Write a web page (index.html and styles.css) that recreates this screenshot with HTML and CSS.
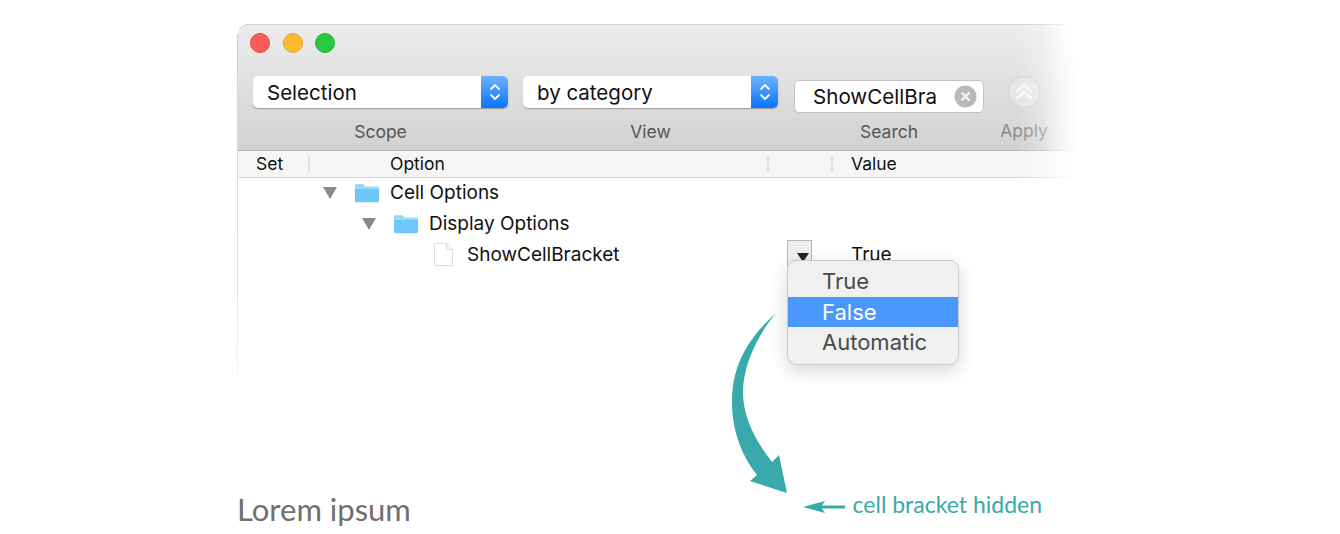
FILE: index.html
```html
<!DOCTYPE html>
<html lang="en">
<head>
    <meta charset="UTF-8">
    <title>Option Inspector</title>
    <link rel="stylesheet" href="styles.css">
</head>
<body>
    <div class="figure">
        <div class="window">
            <div class="toolbar">
                <div class="traffic">
                    <span class="light red"></span>
                    <span class="light yellow"></span>
                    <span class="light green"></span>
                </div>
                <div class="controls">
                    <div class="group group-scope">
                        <div class="select">
                            <span class="select-text">Selection</span>
                            <span class="stepper">
                                <svg width="14" height="22" viewBox="0 0 14 22"><path d="M2.5 8.5 7 4l4.500 4.500M2.500 13.500 7 18l4.500-4.500" fill="none" stroke="#fff" stroke-width="1.800"/></svg>
                            </span>
                        </div>
                        <div class="group-label">Scope</div>
                    </div>
                    <div class="group group-view">
                        <div class="select">
                            <span class="select-text">by category</span>
                            <span class="stepper">
                                <svg width="14" height="22" viewBox="0 0 14 22"><path d="M2.5 8.5 7 4l4.500 4.500M2.500 13.500 7 18l4.500-4.500" fill="none" stroke="#fff" stroke-width="1.800"/></svg>
                            </span>
                        </div>
                        <div class="group-label">View</div>
                    </div>
                    <div class="group group-search">
                        <div class="search">
                            <span class="search-text">ShowCellBra</span>
                            <svg class="clear" width="23" height="23" viewBox="0 0 23 23"><circle cx="11.500" cy="11.500" r="11" fill="#b9b9b9"/><path d="M7.500 7.500l8 8M15.500 7.500l-8 8" stroke="#f4f4f4" stroke-width="2.400"/></svg>
                        </div>
                        <div class="group-label">Search</div>
                    </div>
                    <div class="group group-apply">
                        <svg class="apply-icon" width="34" height="34" viewBox="0 0 34 34"><circle cx="17" cy="17" r="15.500" fill="#e6e6e6" stroke="#d2d2d2"/><path d="M9.500 17 17 10l7.500 7M9.500 24 17 17l7.500 7" fill="none" stroke="#f8f8f8" stroke-width="3"/></svg>
                        <div class="group-label">Apply</div>
                    </div>
                </div>
            </div>
            <div class="table-head">
                <span class="col col-set">Set</span>
                <span class="col col-option">Option</span>
                <span class="col col-blank"></span>
                <span class="col col-value">Value</span>
            </div>
            <div class="tree">
                <div class="row row-1">
                    <span class="disclosure"></span>
                    <svg class="folder" width="26" height="20" viewBox="0 0 27 20"><path d="M1 4V2.500C1 1.500 1.500 1 2.500 1h6.500c1 0 1.500.5 2 1.500l.5 1z" fill="#8ed4fb"/><rect x="1" y="3.500" width="25" height="16" rx="1.500" fill="#6ec6f9"/><path d="M1 5.500C1 4 1.500 3.500 3 3.500h21c1.500 0 2 .5 2 2z" fill="#a4dcfc"/></svg>
                    <span class="row-text">Cell Options</span>
                </div>
                <div class="row row-2">
                    <span class="disclosure"></span>
                    <svg class="folder" width="26" height="20" viewBox="0 0 27 20"><path d="M1 4V2.500C1 1.500 1.500 1 2.500 1h6.500c1 0 1.500.5 2 1.500l.5 1z" fill="#8ed4fb"/><rect x="1" y="3.500" width="25" height="16" rx="1.500" fill="#6ec6f9"/><path d="M1 5.500C1 4 1.500 3.500 3 3.500h21c1.500 0 2 .5 2 2z" fill="#a4dcfc"/></svg>
                    <span class="row-text">Display Options</span>
                </div>
                <div class="row row-3">
                    <svg class="doc" width="21" height="25" viewBox="0 0 21 25"><path d="M1.500 1.500h12l6 6v16h-18z" fill="#fff" stroke="#dcdcdc"/><path d="M13.500 1.500v6h6" fill="#f6f6f6" stroke="#dcdcdc"/></svg>
                    <span class="row-text">ShowCellBracket</span>
                    <span class="dropdown-btn"></span>
                    <span class="row-value">True</span>
                </div>
            </div>
            <div class="fade"></div>
        </div>

        <div class="menu">
            <div class="menu-item first">True</div>
            <div class="menu-item active">False</div>
            <div class="menu-item">Automatic</div>
        </div>

        <svg class="big-arrow" width="70" height="190" viewBox="0 0 70 190"><path d="M49 2C20 28 5 55 5 91c0 29 10 54 25 73l-7 6 37 12-8-38-7 7C27 128 16 105 16 81 16 55 30 25 49 2z" fill="#39a9ac"/></svg>

        <div class="caption-row">
            <h2 class="caption">Lorem ipsum</h2>
            <div class="note">
                <svg class="note-arrow" width="42" height="14" viewBox="0 0 42 14"><path d="M0 7l22-6-4 6 4 6z" fill="#39a9ac"/><rect x="18" y="5.500" width="24" height="3" fill="#39a9ac"/></svg>
                <span class="note-text">cell bracket hidden</span>
            </div>
        </div>
    </div>
</body>
</html>
```

FILE: styles.css
```css
* {
    margin: 0;
    padding: 0;
    box-sizing: border-box;
}

body {
    background: white;
    font-family: Inter, 'Liberation Sans', sans-serif;
    color: #111;
    overflow: hidden;
}

.figure {
    position: relative;
    width: 1340px;
    height: 534px;
    padding: 24px 0 0 237px;
}

/* window */

.window {
    position: relative;
    width: 841px;
    height: 382px;
    padding-left: 1px;
}

.window::before {
    content: "";
    position: absolute;
    left: 0;
    top: 10px;
    bottom: 0;
    width: 1px;
    background: linear-gradient(#cfcfcf, #e4e4e4 70%, rgba(255, 255, 255, 0));
}

.toolbar {
    height: 127px;
    padding: 8px 0 0 15px;
    background: linear-gradient(#ececec, #d2d2d2);
    border-top: 1px solid #cfcfcf;
    border-bottom: 1px solid #b4b4b4;
    border-radius: 10px 0 0 0;
}

.traffic {
    display: flex;
    gap: 12.500px;
    margin-left: -3px;
    height: 20px;
}

.light {
    width: 20px;
    height: 20px;
    border-radius: 50%;
}

.red {
    background: #fc5b57;
    border: 1px solid #e5483f;
}

.yellow {
    background: #fdbc2e;
    border: 1px solid #e2a32a;
}

.green {
    background: #28c83f;
    border: 1px solid #25b136;
}

.controls {
    display: flex;
    margin-top: 23px;
}

.group {
    display: flex;
    flex-direction: column;
    align-items: center;
}

.group-scope,
.group-view {
    width: 255px;
    margin-right: 15px;
}

.group-view {
    margin-right: 16px;
}

.group-search {
    width: 190px;
    margin-right: 16px;
}

.group-apply {
    width: 48px;
}

.group-label {
    margin-top: 12.500px;
    font-size: 17.500px;
    line-height: 21px;
    color: #555;
}

.select {
    display: flex;
    justify-content: space-between;
    width: 100%;
    height: 32px;
    background: white;
    border-radius: 5px;
    box-shadow: 0 1px 1px rgba(0, 0, 0, 0.3);
}

.select-text {
    padding-left: 14px;
    font-size: 20.500px;
    line-height: 34px;
}

.stepper {
    display: flex;
    align-items: center;
    justify-content: center;
    width: 27px;
    background: linear-gradient(#6fb1fb, #0a74fb);
    border-radius: 0 5px 5px 0;
}

.search {
    display: flex;
    justify-content: space-between;
    align-items: center;
    width: 100%;
    height: 33px;
    margin-top: 4px;
    margin-bottom: -5px;
    padding: 0 6px 0 18px;
    background: white;
    border: 1px solid #c4c4c4;
    border-radius: 5px;
}

.search-text {
    font-size: 20.600px;
}

.apply-icon {
    margin-top: -1px;
}

.group-apply .group-label {
    margin-top: 11px;
    color: #8b8b8b;
}

/* table */

.table-head {
    display: flex;
    align-items: center;
    height: 27px;
    background: #f5f5f5;
    border-bottom: 1px solid #d8d8d8;
    font-size: 17.500px;
}

.col {
    height: 18px;
    line-height: 18px;
    border-right: 2px solid #e2e2e2;
}

.col-set {
    width: 72px;
    padding-left: 18px;
}

.col-option {
    width: 459px;
    padding-left: 80px;
}

.col-blank {
    width: 64px;
}

.col-value {
    padding-left: 18px;
    border-right: 0;
}

.tree {
    margin-top: -1px;
    font-size: 19px;
}

.row {
    position: relative;
    display: flex;
    align-items: center;
    height: 31px;
}

.row-1 {
    padding-left: 85px;
}

.row-2 {
    padding-left: 124px;
}

.row-3 {
    height: 30px;
    padding-left: 195px;
}

.disclosure {
    width: 0;
    height: 0;
    margin-right: 17px;
    border-left: 7px solid transparent;
    border-right: 7px solid transparent;
    border-top: 12px solid #8a8a8a;
}

.folder {
    margin-right: 10px;
}

.doc {
    margin-right: 13px;
}

.dropdown-btn {
    position: absolute;
    left: 549px;
    top: 1px;
    width: 25px;
    height: 26px;
    background: #eee;
    border: 1px solid #b5b5b5;
}

.dropdown-btn::after {
    content: "";
    position: absolute;
    left: 9px;
    top: 12px;
    border-left: 6px solid transparent;
    border-right: 6px solid transparent;
    border-top: 9px solid #222;
}

.row-value {
    position: absolute;
    left: 613px;
}

.fade {
    position: absolute;
    top: 0;
    right: 0;
    bottom: 0;
    width: 60px;
    background: linear-gradient(to right, rgba(255, 255, 255, 0), rgba(255, 255, 255, 0.3) 40%, rgba(255, 255, 255, 0.8) 75%, white);
}

/* popup over the table */

.menu {
    position: absolute;
    left: 787px;
    top: 260px;
    width: 172px;
    height: 105px;
    padding-top: 6px;
    background: #f0f0f0;
    border: 1px solid #cacaca;
    border-radius: 9px;
    box-shadow: 0 6px 18px rgba(0, 0, 0, 0.16);
    font-size: 22px;
    color: #4a4a4a;
}

.menu-item {
    height: 30px;
    padding-left: 34px;
    line-height: 30px;
}

.menu-item.first {
    line-height: 28px;
}

.menu-item.active {
    background: #4a98ff;
    color: white;
}

/* annotation */

.big-arrow {
    position: absolute;
    left: 727px;
    top: 311px;
}

.caption-row {
    position: absolute;
    left: 237px;
    top: 490px;
    width: 805px;
    display: flex;
    justify-content: space-between;
    align-items: center;
}

.caption {
    font-family: Lato, sans-serif;
    font-size: 31px;
    font-weight: 400;
    color: #6f6f6f;
}

.note {
    display: flex;
    align-items: center;
    gap: 8px;
    margin-bottom: 10px;
}

.note-arrow {
    margin-top: 6px;
}

.note-text {
    font-family: Lato, sans-serif;
    font-size: 23px;
    color: #39a9ac;
}
```
